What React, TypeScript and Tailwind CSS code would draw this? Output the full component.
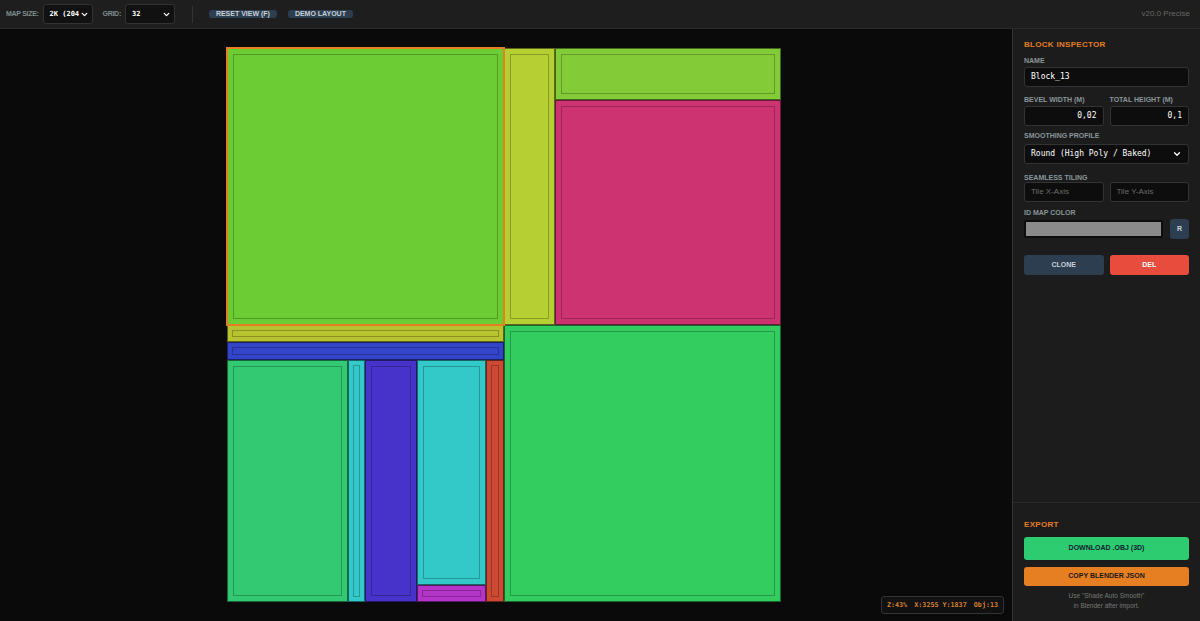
import React from 'react';
import { ChevronDown } from 'lucide-react';

interface Block {
  id: number;
  col: string;
  row: string;
  color: string;
  thin?: boolean;
  selected?: boolean;
}

const blocks: Block[] = [
  { id: 13, col: 'col-[1/17]', row: 'row-[1/17]', color: 'bg-[#6ccc33]', selected: true },
  { id: 2, col: 'col-[17/20]', row: 'row-[1/17]', color: 'bg-[#b6cf33]' },
  { id: 3, col: 'col-[20/33]', row: 'row-[1/4]', color: 'bg-[#84cc37]' },
  { id: 4, col: 'col-[20/33]', row: 'row-[4/17]', color: 'bg-[#cc3370]' },
  { id: 5, col: 'col-[1/17]', row: 'row-[17/18]', color: 'bg-[#b8c330]', thin: true },
  { id: 6, col: 'col-[1/17]', row: 'row-[18/19]', color: 'bg-[#3444c9]', thin: true },
  { id: 7, col: 'col-[1/8]', row: 'row-[19/33]', color: 'bg-[#33c972]' },
  { id: 8, col: 'col-[8/9]', row: 'row-[19/33]', color: 'bg-[#33c9c9]', thin: true },
  { id: 9, col: 'col-[9/12]', row: 'row-[19/33]', color: 'bg-[#4733c9]' },
  { id: 10, col: 'col-[12/16]', row: 'row-[19/32]', color: 'bg-[#33c9c9]' },
  { id: 11, col: 'col-[12/16]', row: 'row-[32/33]', color: 'bg-[#b433c9]', thin: true },
  { id: 12, col: 'col-[16/17]', row: 'row-[19/33]', color: 'bg-[#cc4a33]', thin: true },
  { id: 1, col: 'col-[17/33]', row: 'row-[17/33]', color: 'bg-[#33cc5f]' },
];

const FakeSelect = ({ value }: { value: string }) => (
  <div className="w-[50px] h-[20px] flex items-center justify-between bg-[#111] border border-[#333] rounded-[3px] pl-[6px] pr-[3px]">
    <span className="text-[7px] font-bold text-white font-['DejaVu_Sans_Mono',monospace] whitespace-nowrap">{value}</span>
    <ChevronDown size={9} strokeWidth={3.5} className="text-white shrink-0" />
  </div>
);

const labelStyle = "text-[7px] leading-[8px] font-bold text-[#8a9599] uppercase";
const inputStyle = "h-[20px] bg-[#0d0d0d] border border-[#333] rounded-[3px] px-[6px] flex items-center text-[8px] font-['DejaVu_Sans_Mono',monospace]";

export default function App() {
  return (
    <div className="w-[1200px] h-[621px] flex flex-col bg-[#0a0a0a] font-['Liberation_Sans',Arial,sans-serif] overflow-hidden">
      {/* toolbar */}
      <div className="h-[29px] shrink-0 flex items-center bg-[#1e1e1e] border-b border-[#2a2a2a] pl-[6px] pr-[10px]">
        <span className="text-[7px] tracking-[-0.3px] font-bold text-[#7f8c8d] mr-[4px]">MAP SIZE:</span>
        <FakeSelect value="2K (204" />
        <span className="text-[7px] tracking-[-0.3px] font-bold text-[#7f8c8d] ml-[10px] mr-[4px]">GRID:</span>
        <FakeSelect value="32" />
        <div className="w-px h-[17px] bg-[#333] ml-[17px] mr-[16px]" />
        <button className="h-[8px] w-[68px] bg-[#2c3e50] rounded-[3px] text-[7px] leading-[8px] font-bold text-[#c7d0d8]">RESET VIEW (F)</button>
        <button className="h-[8px] w-[65px] ml-[11px] bg-[#2c3e50] rounded-[3px] text-[7px] leading-[8px] font-bold text-[#c7d0d8]">DEMO LAYOUT</button>
        <span className="ml-auto text-[8px] text-[#666]">v20.0 Precise</span>
      </div>

      <div className="flex-1 flex min-h-0">
        {/* canvas */}
        <div className="relative flex-1 flex items-center justify-center pr-[5px] bg-[#0a0a0a]">
          <div className="w-[554px] h-[554px] grid grid-cols-[repeat(32,minmax(0,1fr))] grid-rows-[repeat(32,minmax(0,1fr))] bg-black">
            {blocks.map(b => (
              <div
                key={b.id}
                className={`${b.col} ${b.row} ${b.color} flex ${b.thin ? 'p-[4px]' : 'p-[5px]'} ${b.selected ? 'outline-2 outline-[#e67e22] -outline-offset-1 z-10 border border-black/20' : 'border border-black/50'}`}
              >
                <div className="flex-1 border border-black/25" />
              </div>
            ))}
          </div>
          <div className="absolute right-[8px] bottom-[7px] h-[18px] w-[123px] px-[5px] flex items-center justify-between bg-[#111] border border-[#333] rounded-[3px] text-[6.7px] font-bold text-[#d9822b] font-['DejaVu_Sans_Mono',monospace]">
            <span>Z:43%</span>
            <span>X:3255 Y:1837</span>
            <span>Obj:13</span>
          </div>
        </div>

        {/* sidebar */}
        <div className="w-[188px] shrink-0 flex flex-col justify-between bg-[#1c1c1c] border-l border-[#333]">
          <div className="px-[11px] pt-[10px]">
            <h3 className="text-[8px] leading-[12px] font-extrabold text-[#e67e22] tracking-[0.3px] mb-[6px]">BLOCK INSPECTOR</h3>
            <div className={`${labelStyle} mb-[2px]`}>Name</div>
            <div className={`${inputStyle} text-white`}>Block_13</div>

            <div className="grid grid-cols-2 gap-[6px] mt-[9px]">
              <div>
                <div className={`${labelStyle} mb-[2px]`}>Bevel Width (M)</div>
                <div className={`${inputStyle} text-white justify-end`}>0,02</div>
              </div>
              <div>
                <div className={`${labelStyle} mb-[2px]`}>Total Height (M)</div>
                <div className={`${inputStyle} text-white justify-end`}>0,1</div>
              </div>
            </div>

            <div className={`${labelStyle} mt-[6px] mb-[4px]`}>Smoothing Profile</div>
            <div className={`${inputStyle} text-white justify-between`}>
              <span>Round (High Poly / Baked)</span>
              <ChevronDown size={10} strokeWidth={3} className="text-white" />
            </div>

            <div className={`${labelStyle} mt-[10px] mb-[0px]`}>Seamless Tiling</div>
            <div className="grid grid-cols-2 gap-[6px]">
              <div className={`${inputStyle} font-['Liberation_Sans',sans-serif] text-[#6b6b6b]`}>Tile X-Axis</div>
              <div className={`${inputStyle} font-['Liberation_Sans',sans-serif] text-[#6b6b6b]`}>Tile Y-Axis</div>
            </div>

            <div className={`${labelStyle} mt-[7px] mb-[2px]`}>ID Map Color</div>
            <div className="flex items-center gap-[7px]">
              <div className="flex-1 h-[18px] bg-[#8a8a8a] border-2 border-[#0d0d0d] rounded-[2px]" />
              <button className="w-[19px] h-[20px] bg-[#2c3e50] rounded-[3px] text-[7px] font-bold text-[#c7d0d8]">R</button>
            </div>

            <div className="grid grid-cols-2 gap-[6px] mt-[16px]">
              <button className="h-[20px] bg-[#2c3e50] rounded-[3px] text-[7px] font-bold text-[#c7d0d8]">CLONE</button>
              <button className="h-[20px] bg-[#e74c3c] rounded-[3px] text-[7px] font-bold text-white">DEL</button>
            </div>
          </div>

          <div className="px-[11px] pt-[16px] pb-[10px] border-t border-[#2a2a2a]">
            <h3 className="text-[8px] leading-[12px] font-extrabold text-[#e67e22] tracking-[0.3px] mb-[2px]">EXPORT</h3>
            <button className="w-full h-[23px] bg-[#2ecc71] rounded-[3px] text-[7px] font-bold text-[#123]">DOWNLOAD .OBJ (3D)</button>
            <button className="w-full h-[19px] mt-[7px] bg-[#e67e22] rounded-[3px] text-[7px] font-bold text-[#1a1a1a]">COPY BLENDER JSON</button>
            <p className="mt-[5px] text-center text-[6.5px] leading-[10px] text-[#777]">
              Use "Shade Auto Smooth"<br />in Blender after import.
            </p>
          </div>
        </div>
      </div>
    </div>
  );
}
